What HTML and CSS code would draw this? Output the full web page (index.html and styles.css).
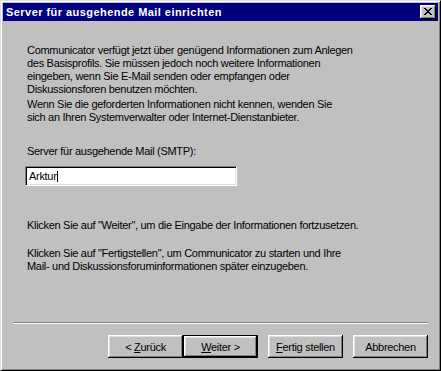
FILE: index.html
```html
<!DOCTYPE html>
<html lang="de">
<head>
    <meta charset="UTF-8">
    <title>Server für ausgehende Mail einrichten</title>
    <link rel="stylesheet" href="styles.css">
</head>
<body>
    <div class="window">
        <div class="titlebar">
            <span class="title">Server für ausgehende Mail einrichten</span>
            <button class="close-btn" type="button">
                <!-- Win95 close glyph, 8x7 pixels -->
                <svg width="8" height="7" viewBox="0 0 8 7" shape-rendering="crispEdges">
                    <path fill="#000" d="M0 0h2v1h-2zM6 0h2v1h-2zM1 1h2v1h-2zM5 1h2v1h-2zM2 2h4v1h-4zM3 3h2v1h-2zM2 4h4v1h-4zM1 5h2v1h-2zM5 5h2v1h-2zM0 6h2v1h-2zM6 6h2v1h-2z"/>
                </svg>
            </button>
        </div>

        <div class="content">
            <p class="text intro">
                Communicator verfügt jetzt über genügend Informationen zum Anlegen<br>
                des Basisprofils. Sie müssen jedoch noch weitere Informationen<br>
                eingeben, wenn Sie E-Mail senden oder empfangen oder<br>
                Diskussionsforen benutzen möchten.
            </p>
            <p class="text help">
                Wenn Sie die geforderten Informationen nicht kennen, wenden Sie<br>
                sich an Ihren Systemverwalter oder Internet-Dienstanbieter.
            </p>

            <label class="text field-label" for="smtpServer">Server für ausgehende Mail (SMTP):</label>
            <div class="edit" id="smtpServer">Arktur<span class="caret"></span></div>

            <p class="text next-hint">Klicken Sie auf "Weiter", um die Eingabe der Informationen fortzusetzen.</p>
            <p class="text finish-hint">
                Klicken Sie auf "Fertigstellen", um Communicator zu starten und Ihre<br>
                Mail- und Diskussionsforuminformationen später einzugeben.
            </p>

            <div class="separator"></div>

            <div class="buttons">
                <div class="btn-pair">
                    <button class="btn" type="button">&lt; <u>Z</u>urück</button>
                    <button class="btn btn-default" type="button"><u>W</u>eiter &gt;</button>
                </div>
                <button class="btn" type="button"><u>F</u>ertig stellen</button>
                <button class="btn" type="button">Abbrechen</button>
            </div>
        </div>
    </div>
</body>
</html>
```

FILE: styles.css
```css
html, body {
    margin: 0;
    padding: 0;
}

body {
    width: 441px;
    height: 371px;
    font-family: "Liberation Sans", Arial, sans-serif;
    font-size: 11px;
    letter-spacing: -0.3px;
    color: #000;
    background: #c0c0c0;
}

/* fenster mit 3D-rahmen */
.window {
    width: 441px;
    height: 371px;
    box-sizing: border-box;
    border: 1px solid;
    border-color: #dfdfdf #000 #000 #dfdfdf;
    box-shadow: inset 1px 1px #fff, inset -1px -1px #808080;
    padding: 2px;
    background: #c0c0c0;
    display: flex;
    flex-direction: column;
}

.titlebar {
    height: 18px;
    background: #000080;
    display: flex;
    align-items: center;
    justify-content: space-between;
    padding: 0 2px 0 3px;
    flex: none;
}

.title {
    color: #fff;
    font-weight: bold;
    font-size: 11px;
    letter-spacing: 0.45px;
}

.close-btn {
    width: 16px;
    height: 14px;
    padding: 0 0 1px 0;
    margin: 0;
    border: none;
    background: #c0c0c0;
    box-shadow: inset -1px -1px #000, inset 1px 1px #fff, inset -2px -2px #808080, inset 2px 2px #dfdfdf;
    display: flex;
    align-items: center;
    justify-content: center;
}

.content {
    flex: 1;
    display: flex;
    flex-direction: column;
    padding: 23px 10px 10px 22px;
}

.text {
    margin: 0 0 0 2px;
    line-height: 13px;
    display: block;
    white-space: nowrap;
}

.help {
    margin-top: 2px;
}

.field-label {
    margin-top: 21px;
}

/* eingabefeld, vertieft */
.edit {
    width: 212px;
    height: 20px;
    box-sizing: border-box;
    margin-top: 8px;
    background: #fff;
    border: 1px solid;
    border-color: #808080 #fff #fff #808080;
    box-shadow: inset 1px 1px #000, inset -1px -1px #dfdfdf;
    padding: 3px 0 0 3px;
    line-height: 13px;
    display: flex;
    align-items: flex-start;
}

.caret {
    display: inline-block;
    width: 1px;
    height: 11px;
    background: #000;
    margin-top: 1px;
}

.next-hint {
    margin-top: 33px;
}

.finish-hint {
    margin-top: 15px;
}

.separator {
    margin: auto 0 0 -11px;
    height: 1px;
    background: #808080;
    border-bottom: 1px solid #fff;
}

.buttons {
    margin-top: 11px;
    display: flex;
    justify-content: flex-end;
    gap: 10px;
}

.btn-pair {
    display: flex;
}

.btn {
    width: 75px;
    height: 23px;
    margin: 0;
    padding: 0;
    font-family: inherit;
    font-size: 11px;
    letter-spacing: -0.3px;
    color: #000;
    background: #c0c0c0;
    border: none;
    box-shadow: inset -1px -1px #000, inset 1px 1px #fff, inset -2px -2px #808080, inset 2px 2px #dfdfdf;
}

.btn u {
    text-decoration: underline;
    text-underline-offset: 1px;
}

.btn-default {
    box-shadow: inset 0 0 0 1px #000, inset -2px -2px #000, inset 2px 2px #fff, inset -3px -3px #808080, inset 3px 3px #dfdfdf;
}
```
